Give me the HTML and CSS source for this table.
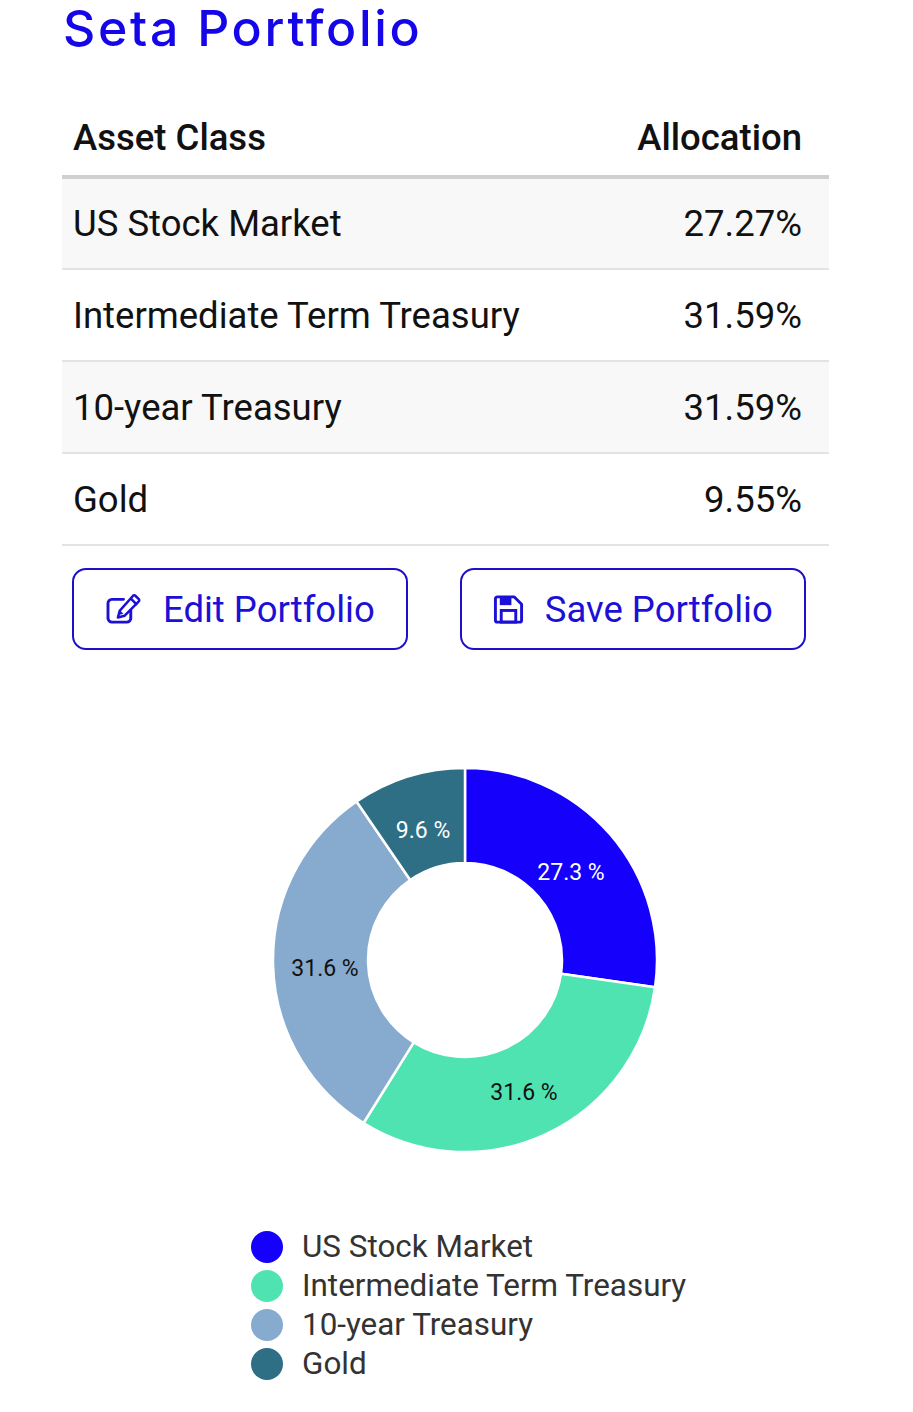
FILE: index.html
```html
<!DOCTYPE html>
<html lang="en">
<head>
<meta charset="utf-8">
<title>Seta Portfolio</title>
<link rel="stylesheet" href="styles.css">
</head>
<body>
<main class="page">
  <h1 class="title">Seta Portfolio</h1>
  <table class="alloc">
    <thead>
      <tr><th class="col-name">Asset Class</th><th class="col-val">Allocation</th></tr>
    </thead>
    <tbody>
      <tr><td class="col-name">US Stock Market</td><td class="col-val">27.27%</td></tr>
      <tr><td class="col-name">Intermediate Term Treasury</td><td class="col-val">31.59%</td></tr>
      <tr><td class="col-name">10-year Treasury</td><td class="col-val">31.59%</td></tr>
      <tr><td class="col-name">Gold</td><td class="col-val">9.55%</td></tr>
    </tbody>
  </table>
  <div class="actions">
    <button class="btn" type="button">
      <svg class="icon" viewBox="0 0 38 32" width="37" height="31" aria-hidden="true">
        <path d="M19 5.5 H7 a4 4 0 0 0 -4 4 V25 a4 4 0 0 0 4 4 H22.5 a4 4 0 0 0 4 -4 V17" fill="none" stroke="currentColor" stroke-width="3" stroke-linecap="round"/>
        <path d="M31.2 1.8 l3.6 3.6 a1.6 1.6 0 0 1 0 2.3 L20 22.5 l-6.8 1.8 l1.8 -6.8 L28.9 1.8 a1.6 1.6 0 0 1 2.3 0 Z" fill="none" stroke="currentColor" stroke-width="2.6" stroke-linejoin="round"/>
        <path d="M26.4 4.6 l6.6 6.6" stroke="currentColor" stroke-width="2.6"/>
        <path d="M13.9 21.8 l1.4 -5 l3.6 3.6 Z" fill="currentColor"/>
      </svg>
      <span>Edit Portfolio</span>
    </button>
    <button class="btn" type="button">
      <svg class="icon" viewBox="0 0 32 32" width="31" height="31" aria-hidden="true">
        <path d="M4.5 3 H22 L29.5 10.5 V27 a2 2 0 0 1 -2 2 H4.5 a2 2 0 0 1 -2 -2 V5 a2 2 0 0 1 2 -2 Z" fill="none" stroke="currentColor" stroke-width="3" stroke-linejoin="round"/>
        <rect x="7" y="3" width="12" height="8.5" fill="currentColor"/>
        <rect x="8.5" y="17" width="15" height="12" fill="none" stroke="currentColor" stroke-width="3"/>
      </svg>
      <span>Save Portfolio</span>
    </button>
  </div>
  <div class="chart">
    <svg class="donut" viewBox="0 0 400 400" width="400" height="400">
      <g stroke="#fff" stroke-width="2.5" stroke-linejoin="round">
        <path fill="#1400fb" d="M200 8 A192 192 0 0 1 390.05 227.29 L296.02 213.79 A97 97 0 0 0 200 103 Z"/>
        <path fill="#50e3b2" d="M390.05 227.29 A192 192 0 0 1 98.55 363 L148.75 282.35 A97 97 0 0 0 296.02 213.79 Z"/>
        <path fill="#87aacf" d="M98.55 363 A192 192 0 0 1 91.56 41.54 L145.21 119.95 A97 97 0 0 0 148.75 282.35 Z"/>
        <path fill="#2e6f85" d="M91.56 41.54 A192 192 0 0 1 200 8 L200 103 A97 97 0 0 0 145.21 119.95 Z"/>
      </g>
      <g class="slice-label">
        <text x="306" y="120" fill="#fff">27.3 %</text>
        <text x="259" y="340" fill="#111">31.6 %</text>
        <text x="60" y="216" fill="#111">31.6 %</text>
        <text x="158" y="78" fill="#fff">9.6 %</text>
      </g>
    </svg>
  </div>
  <ul class="legend">
    <li><span class="dot dot-us"></span>US Stock Market</li>
    <li><span class="dot dot-itt"></span>Intermediate Term Treasury</li>
    <li><span class="dot dot-10y"></span>10-year Treasury</li>
    <li><span class="dot dot-gold"></span>Gold</li>
  </ul>
</main>
</body>
</html>
```
FILE: styles.css
```css
* { box-sizing: border-box; }
html, body { margin: 0; padding: 0; background: #fff; }
body { font-family: Roboto, "Liberation Sans", sans-serif; color: #111; }

.page { padding-left: 62px; width: 829px; }

.title {
  margin: 0;
  padding: 0 0 0 1px;
  height: 100px;
  font-family: Inter, "Open Sans", sans-serif;
  font-weight: 500;
  font-size: 50px;
  letter-spacing: 2.7px;
  line-height: 56px;
  color: #1406e8;
}

.alloc {
  width: 767px;
  border-collapse: collapse;
  font-size: 36.5px;
}
.alloc th, .alloc td { padding: 0 27px 0 11px; vertical-align: middle; }
.alloc th {
  height: 77px;
  font-weight: 500;
  font-size: 36.5px;
  color: #111;
  border-bottom: 4px solid #cfcfcf;
}
.alloc td { height: 92px; border-bottom: 2px solid #e3e3e3; color: #111; }
.alloc tbody tr:nth-child(odd) td { background: #f8f8f8; }
.col-name { text-align: left; }
.col-val { text-align: right; }

.actions {
  display: flex;
  gap: 52px;
  margin: 22px 0 0 10px;
}
.btn {
  display: inline-flex;
  align-items: center;
  gap: 21px;
  height: 82px;
  padding: 0 31px 0 31px;
  background: #fff;
  border: 2px solid #1d10c8;
  border-radius: 14px;
  color: #1d10d6;
  font-family: Roboto, "Liberation Sans", sans-serif;
  font-size: 36.5px;
  cursor: pointer;
}
.icon { display: block; flex: none; }

.chart { margin: 110px 0 0 203px; width: 400px; height: 400px; }
.donut { display: block; }
.slice-label text {
  font-family: Roboto, "Liberation Sans", sans-serif;
  font-size: 23px;
  text-anchor: middle;
}

.legend {
  list-style: none;
  margin: 67px 0 0 189px;
  padding: 0;
  font-size: 31.4px;
  color: #333;
}
.legend li {
  display: flex;
  align-items: center;
  gap: 19px;
  height: 39px;
}
.dot { width: 32px; height: 32px; border-radius: 50%; flex: none; }
.dot-us { background: #1400fb; }
.dot-itt { background: #50e3b2; }
.dot-10y { background: #87aacf; }
.dot-gold { background: #2e6f85; }
```
